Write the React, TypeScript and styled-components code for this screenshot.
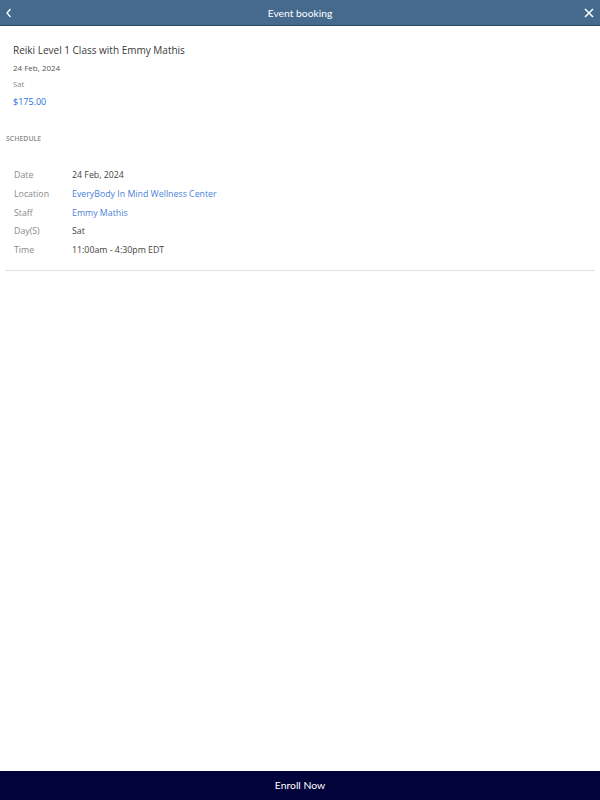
import React from "react";
import styled, { createGlobalStyle } from "styled-components";

const Global = createGlobalStyle`
  html, body { margin: 0; padding: 0; background: #fff; }
  body { font-family: "Open Sans", "Liberation Sans", sans-serif; }
  #root { min-height: 100vh; }
`;

const Page = styled.div`
  display: flex;
  flex-direction: column;
  height: 800px;
  width: 600px;
  background: #fff;
`;

const Header = styled.header`
  height: 25px;
  flex: none;
  background: #456a8e;
  border-bottom: 1px solid #2a4867;
  display: grid;
  grid-template-columns: 40px 1fr 40px;
  align-items: center;
  color: #fff;
`;

const Title = styled.div`
  text-align: center;
  font-family: Lato, "Open Sans", sans-serif;
  font-size: 10.3px;
  color: #fff;
`;

const IconBtn = styled.div<{ $align: "start" | "end" }>`
  display: flex;
  justify-content: ${(p) => (p.$align === "start" ? "flex-start" : "flex-end")};
  padding: ${(p) => (p.$align === "start" ? "0 0 0 5px" : "0 6px 0 0")};
  align-items: center;
`;

const Main = styled.main`
  flex: 1;
  padding: 0 5px;
`;

const Summary = styled.section`
  padding: 17px 8px 0 8px;
  display: flex;
  flex-direction: column;
`;

const EventName = styled.div`
  font-size: 10px;
  color: #3a3a3a;
  line-height: 14px;
`;

const SubLine = styled.div<{ $muted?: boolean }>`
  font-size: ${(p) => (p.$muted ? "7.6px" : "8px")};
  color: ${(p) => (p.$muted ? "#8a8a8a" : "#555")};
  line-height: 12px;
  margin-top: ${(p) => (p.$muted ? "4px" : "5px")};
`;

const Price = styled.div`
  font-size: 9px;
  color: #2a6fd6;
  line-height: 12px;
  margin-top: 6px;
`;

const SectionLabel = styled.div`
  margin-top: 26px;
  padding-left: 1px;
  font-size: 6.8px;
  font-weight: 600;
  color: #8a8a8a;
  letter-spacing: 0.1px;
  line-height: 10px;
`;

const Table = styled.div`
  margin-top: 22px;
  padding: 0 8px 10px 9px;
  display: grid;
  grid-template-columns: 58px 1fr;
  border-bottom: 1px solid #e2e2e2;
`;

const Label = styled.div`
  font-size: 8.8px;
  color: #8a8a8a;
  line-height: 18.8px;
`;

const Value = styled.div<{ $link?: boolean }>`
  font-size: 8.8px;
  color: ${(p) => (p.$link ? "#4d7fd9" : "#444")};
  line-height: 18.8px;
`;

const Footer = styled.footer`
  height: 29px;
  flex: none;
  background: #03033b;
  display: flex;
  align-items: center;
  justify-content: center;
  padding-bottom: 1px;
  box-sizing: border-box;
  color: #fff;
  font-family: Lato, "Open Sans", sans-serif;
  font-size: 10.4px;
`;

const rows: { label: string; value: string; link?: boolean }[] = [
  { label: "Date", value: "24 Feb, 2024" },
  { label: "Location", value: "EveryBody In Mind Wellness Center", link: true },
  { label: "Staff", value: "Emmy Mathis", link: true },
  { label: "Day(S)", value: "Sat" },
  { label: "Time", value: "11:00am - 4:30pm EDT" },
];

export default function App() {
  return (
    <>
      <Global />
      <Page>
        <Header>
          <IconBtn $align="start">
            <svg width="8" height="10" viewBox="0 0 8 10">
              <path d="M5.5 1 L2 5 L5.5 9" stroke="#fff" strokeWidth="1.3" fill="none" />
            </svg>
          </IconBtn>
          <Title>Event booking</Title>
          <IconBtn $align="end">
            <svg width="10" height="10" viewBox="0 0 10 10">
              <path d="M1 1 L9 9 M9 1 L1 9" stroke="#fff" strokeWidth="1.5" fill="none" />
            </svg>
          </IconBtn>
        </Header>
        <Main>
          <Summary>
            <EventName>Reiki Level 1 Class with Emmy Mathis</EventName>
            <SubLine>24 Feb, 2024</SubLine>
            <SubLine $muted>Sat</SubLine>
            <Price>$175.00</Price>
          </Summary>
          <SectionLabel>SCHEDULE</SectionLabel>
          <Table>
            {rows.map((r) => (
              <React.Fragment key={r.label}>
                <Label>{r.label}</Label>
                <Value $link={r.link}>{r.value}</Value>
              </React.Fragment>
            ))}
          </Table>
        </Main>
        <Footer>Enroll Now</Footer>
      </Page>
    </>
  );
}
